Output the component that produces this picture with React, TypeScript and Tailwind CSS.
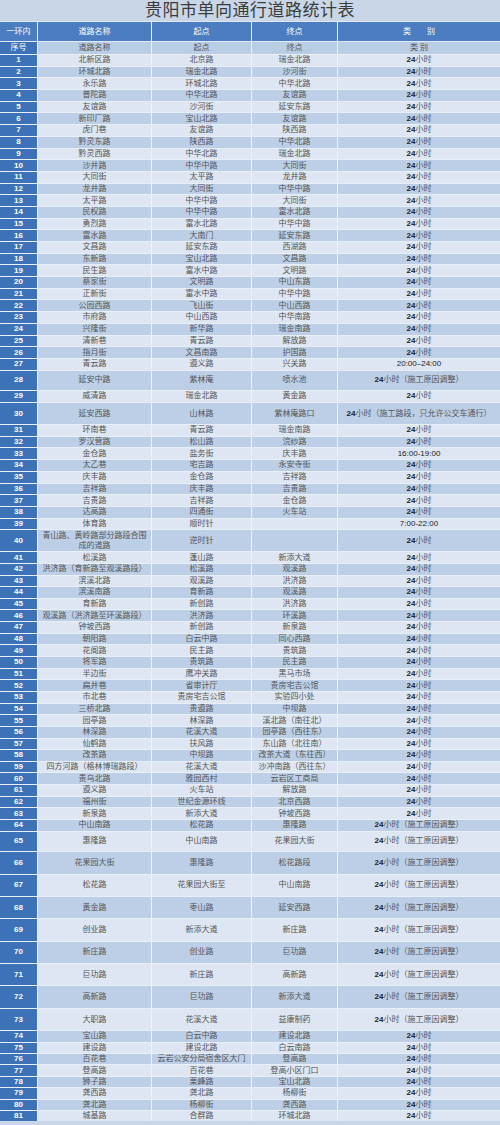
import React from 'react'

type Row = [number, string, string, string, string]

const H = '24小时'
const C = '24小时（施工原因调整）'

const rows: Row[] = [
  [1, '北新区路', '北京路', '瑞金北路', H],
  [2, '环城北路', '瑞金北路', '沙河街', H],
  [3, '永乐路', '环城北路', '中华北路', H],
  [4, '普陀路', '中华北路', '友谊路', H],
  [5, '友谊路', '沙河街', '延安东路', H],
  [6, '新印厂路', '宝山北路', '友谊路', H],
  [7, '虎门巷', '友谊路', '陕西路', H],
  [8, '黔灵东路', '陕西路', '中华北路', H],
  [9, '黔灵西路', '中华北路', '瑞金北路', H],
  [10, '沙井路', '中华中路', '大同街', H],
  [11, '大同街', '太平路', '龙井路', H],
  [12, '龙井路', '大同街', '中华中路', H],
  [13, '太平路', '中华中路', '大同街', H],
  [14, '民权路', '中华中路', '富水北路', H],
  [15, '勇烈路', '富水北路', '中华中路', H],
  [16, '富水路', '大南门', '延安东路', H],
  [17, '文昌路', '延安东路', '西湖路', H],
  [18, '东新路', '宝山北路', '文昌路', H],
  [19, '民生路', '富水中路', '文明路', H],
  [20, '蔡家街', '文明路', '中山东路', H],
  [21, '正新街', '富水中路', '中华中路', H],
  [22, '公园西路', '飞山街', '中山西路', H],
  [23, '市府路', '中山西路', '中华南路', H],
  [24, '兴隆街', '新华路', '瑞金南路', H],
  [25, '清新巷', '青云路', '解放路', H],
  [26, '指月街', '文昌南路', '护国路', H],
  [27, '青云路', '遵义路', '兴关路', '20:00–24:00'],
  [28, '延安中路', '紫林庵', '喷水池', C],
  [29, '威清路', '瑞金北路', '黄金路', H],
  [30, '延安西路', '山林路', '紫林庵路口', '24小时（施工路段，只允许公交车通行）'],
  [31, '环南巷', '青云路', '瑞金南路', H],
  [32, '罗汉营路', '松山路', '浣纱路', H],
  [33, '金仓路', '盐务街', '庆丰路', '16:00-19:00'],
  [34, '太乙巷', '宅吉路', '永安寺街', H],
  [35, '庆丰路', '金仓路', '吉祥路', H],
  [36, '吉祥路', '庆丰路', '吉贵路', H],
  [37, '吉贵路', '吉祥路', '金仓路', H],
  [38, '达高路', '四通街', '火车站', H],
  [39, '体育路', '顺时针', '', '7:00-22:00'],
  [40, '青山路、黄岭路部分路段合围|成的道路', '逆时针', '', H],
  [41, '松溪路', '蓬山路', '新添大道', H],
  [42, '洪济路（育新路至观溪路段）', '松溪路', '观溪路', H],
  [43, '滨溪北路', '观溪路', '洪济路', H],
  [44, '滨溪南路', '育新路', '观溪路', H],
  [45, '育新路', '新创路', '洪济路', H],
  [46, '观溪路（洪济路至环溪路段）', '洪济路', '环溪路', H],
  [47, '钟坡西路', '新创路', '新泉路', H],
  [48, '朝阳路', '白云中路', '同心西路', H],
  [49, '花阁路', '民主路', '贵筑路', H],
  [50, '将军路', '贵筑路', '民主路', H],
  [51, '半边街', '鹰冲关路', '黑马市场', H],
  [52, '扁井巷', '省审计厅', '贵房宅吉公馆', H],
  [53, '市北巷', '贵房宅吉公馆', '实验四小处', H],
  [54, '三桥北路', '贵遵路', '中坝路', H],
  [55, '园亭路', '林深路', '溪北路（南往北）', H],
  [56, '林深路', '花溪大道', '园亭路（西往东）', H],
  [57, '仙鹤路', '扶风路', '东山路（北往南）', H],
  [58, '改茶路', '中坝路', '改茶大道（东往西）', H],
  [59, '四方河路（格林博瑞路段）', '花溪大道', '沙冲南路（西往东）', H],
  [60, '贵乌北路', '雅园西村', '云岩区工商局', H],
  [61, '遵义路', '火车站', '解放路', H],
  [62, '福州街', '世纪金源环线', '北京西路', H],
  [63, '新泉路', '新添大道', '钟坡西路', H],
  [64, '中山南路', '松花路', '惠隆路', C],
  [65, '惠隆路', '中山南路', '花果园大街', C],
  [66, '花果园大街', '惠隆路', '松花路段', C],
  [67, '松花路', '花果园大街至', '中山南路', C],
  [68, '黄金路', '枣山路', '延安西路', C],
  [69, '创业路', '新添大道', '新庄路', C],
  [70, '新庄路', '创业路', '巨功路', C],
  [71, '巨功路', '新庄路', '高新路', C],
  [72, '高新路', '巨功路', '新添大道', C],
  [73, '大职路', '花溪大道', '益康制药', C],
  [74, '宝山路', '白云中路', '建设北路', H],
  [75, '建设路', '建设北路', '白云南路', H],
  [76, '百花巷', '云岩公安分局宿舍区大门', '登高路', H],
  [77, '登高路', '百花巷', '登高小区门口', H],
  [78, '狮子路', '栗峰路', '宝山北路', H],
  [79, '龚西路', '龚北路', '杨柳街', H],
  [80, '龚北路', '杨柳街', '龚西路', H],
  [81, '城基路', '合群路', '环城北路', H],
]

function rowHeight(n: number) {
  if (n === 28) return 'h-[20px]'
  if (n === 29) return 'h-[12.5px]'
  if (n === 30) return 'h-[22px]'
  if (n === 40) return 'h-[22px]'
  if (n === 65) return 'h-[20.5px]'
  if (n >= 66 && n <= 73) return 'h-[22.4px]'
  if (n >= 74) return 'h-[11.4px]'
  if (n >= 41) return 'h-[11.65px]'
  return 'h-[11.7px]'
}

const serif = "font-['Liberation_Serif','Noto_Sans_CJK_SC',serif]"
const sans = "font-['Liberation_Sans','Noto_Sans_CJK_SC',sans-serif]"

function Kind({ v }: { v: string }) {
  if (v.startsWith('24小时')) {
    return (
      <span className="whitespace-nowrap">
        <span className={`${sans} font-bold text-[#222]`}>24</span>
        <span className="text-[#555]">{v.slice(2)}</span>
      </span>
    )
  }
  return <span className={`${sans} text-[#222]`}>{v}</span>
}

function Cell({ w, children, last }: { w: string; children: React.ReactNode; last?: boolean }) {
  return (
    <div className={`${w} flex items-center justify-center text-center ${last ? '' : 'border-r border-[#eef3f9]'}`}>
      {children}
    </div>
  )
}

export default function App() {
  return (
    <div className={`w-[500px] h-[1125px] overflow-hidden bg-[#c9d6e7] ${serif} text-[8px] leading-none text-[#555]`}>
      <div className="h-[21px] flex items-center justify-center text-[17px] text-[#3c3c3c] tracking-[0.5px]">
        贵阳市单向通行道路统计表
      </div>

      <div className="h-[21px] flex bg-[#4b7dc0] text-white border-y border-[#dfe8f3]">
        <Cell w="w-[38px]">一环内</Cell>
        <Cell w="w-[114px]">道路名称</Cell>
        <Cell w="w-[100px]">起点</Cell>
        <Cell w="w-[86px]">终点</Cell>
        <Cell w="w-[162px]" last>
          <span className="whitespace-pre">类　　别</span>
        </Cell>
      </div>

      <div className="h-[12px] flex bg-[#b9cde5]">
        <div className="w-[38px] flex items-center justify-center bg-[#3e72b8] text-white border-r border-[#eef3f9]">序号</div>
        <Cell w="w-[114px]">道路名称</Cell>
        <Cell w="w-[100px]">起点</Cell>
        <Cell w="w-[86px]">终点</Cell>
        <Cell w="w-[162px]" last>
          <span className="whitespace-pre">类 别</span>
        </Cell>
      </div>

      {rows.map(([n, name, from, to, kind]) => (
        <div
          key={n}
          className={`flex ${rowHeight(n)} border-t border-[#e9eff7] ${n % 2 === 1 ? 'bg-[#dde6f2]' : 'bg-[#bccfe7]'}`}
        >
          <div className={`w-[38px] flex items-center justify-center bg-[#3e72b8] text-white ${sans} font-bold text-[8px] border-r border-[#eef3f9]`}>
            {n}
          </div>
          <Cell w="w-[114px]">
            {name.includes('|') ? (
              <span className="leading-[10px]">
                {name.split('|')[0]}
                <br />
                {name.split('|')[1]}
              </span>
            ) : (
              <span className="whitespace-nowrap">{name}</span>
            )}
          </Cell>
          <Cell w="w-[100px]">
            <span className="whitespace-nowrap">{from}</span>
          </Cell>
          <Cell w="w-[86px]">
            <span className="whitespace-nowrap">{to}</span>
          </Cell>
          <Cell w="w-[162px]" last>
            <Kind v={kind} />
          </Cell>
        </div>
      ))}
    </div>
  )
}
